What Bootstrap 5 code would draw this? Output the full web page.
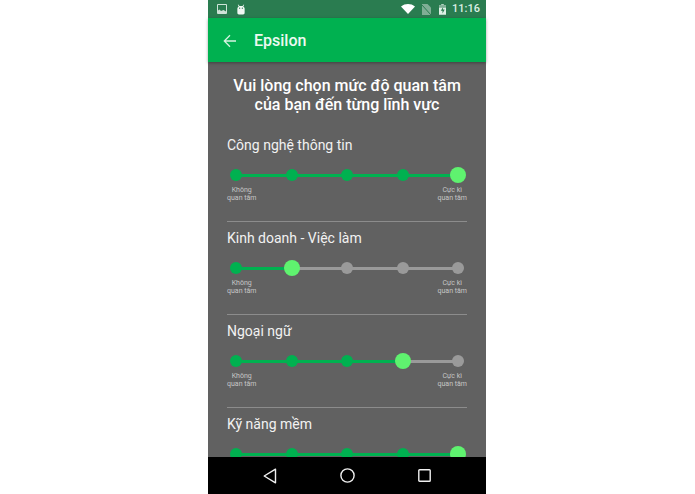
<!DOCTYPE html>
<html lang="vi">
<head>
<meta charset="utf-8">
<title>Epsilon</title>
<link href="https://cdn.jsdelivr.net/npm/bootstrap@5.3.0/dist/css/bootstrap.min.css" rel="stylesheet">
<style>
html,body{height:100%;background:#fff;overflow:hidden}
body{font-family:Roboto,"Noto Sans",sans-serif}
.phone{width:278px;height:494px;margin-left:208px}
.statusbar{height:18px;background:#2a7c50;padding:0 6px 0 9px;flex:none}
.statusbar .clock{font-size:11px;font-weight:500;color:#dff0e6;line-height:18px;margin-left:6px}
.gap-left{margin-right:9px}
.gap-wifi{margin-right:7px}
.gap-sim{margin-right:8px}
.appbar{height:44px;background:#00b150;flex:none;box-shadow:0 1px 3px rgba(0,0,0,.35);padding:2px 0 0 15px;position:relative;z-index:2}
.appbar .ttl{font-size:16px;font-weight:500;color:#eef9f2;margin-left:17px}
.screen{flex:1 1 auto;min-height:0;background:#616161;overflow:hidden;padding:14px 19px 0}
.heading{font-size:16px;font-weight:500;line-height:19px;color:#fff;text-align:center;margin:0 0 23px}
.topic{height:85px;border-bottom:1px solid #8c8c8c}
.topic:last-child{border-bottom:0}
.topic-name{font-size:14px;line-height:16px;color:#f2f2f2;margin:0}
.slider{margin:14px 1px 0;height:16px}
.cell{width:16px;height:16px;flex:none;position:relative;z-index:1}
.pip{width:12px;height:12px;border-radius:50%;background:#00b150}
.pip.off{background:#9a9a9a}
.pip.now{width:16px;height:16px;background:#5ff26f}
.seg{flex:1 1 0;height:3px;margin:1px -3px 0;background:#00b150}
.seg.off{background:#9a9a9a}
.ends{font-size:7px;line-height:8px;color:#c6c6c6;text-align:center;margin-top:3px}
.navbar-bottom{height:37px;background:#000;flex:none;padding:0 55px;position:relative;z-index:2}
</style>
</head>
<body>
<div class="phone d-flex flex-column">
  <div class="statusbar d-flex align-items-center">
    <svg width="10" height="10" viewBox="0 0 10 10" class="gap-left"><rect width="10" height="10" rx="1" fill="#cfe3d8"/><path d="M1 1h8v6.500L6.500 6 4 7 2.500 5.500 1 6.500z" fill="#2a7c50"/></svg>
    <svg width="10" height="11" viewBox="0 0 11 11"><path d="M2.500 0l1.300 1.700h3.400L8.500 0l.5.300L8 2.100c1 .6 1.500 1.400 1.500 2.400v4.700c0 1-.7 1.800-1.700 1.800H3.200c-1 0-1.700-.8-1.700-1.800V4.500c0-1 .5-1.800 1.500-2.400L2 .3z" fill="#f2f8f4"/><circle cx="4" cy="4" r=".7" fill="#2a7c50"/><circle cx="7" cy="4" r=".7" fill="#2a7c50"/></svg>
    <div class="ms-auto d-flex align-items-center">
      <svg width="14" height="10" viewBox="0 0 14 10" class="gap-wifi"><path d="M0 2.500C4-.8 10-.8 14 2.500L7 10z" fill="#fff"/></svg>
      <svg width="9" height="11" viewBox="0 0 9 11" class="gap-sim"><path d="M0 11V0h5.500L9 3.500V11z" fill="#7fae95"/><path d="M0 1l9 10" stroke="#2a7c50" stroke-width="1"/></svg>
      <svg width="7" height="11" viewBox="0 0 8 12"><path d="M2.500 0h3v1H8v11H0V1h2.500z" fill="#dff0e6"/><path d="M0 1h8v3H0z" fill="#7fae95"/><path d="M4.800 3L2 7.500h2v3l2.500-4.500H4.500z" fill="#2a7c50"/></svg>
      <span class="clock">11:16</span>
    </div>
  </div>

  <div class="appbar d-flex align-items-center">
    <svg width="14" height="14" viewBox="0 0 14 14"><path d="M13 7H1.500M7 1.300L1.300 7 7 12.700" fill="none" stroke="#d6f3e1" stroke-width="1.300"/></svg>
    <span class="ttl">Epsilon</span>
  </div>

  <div class="screen">
    <h1 class="heading">Vui lòng chọn mức độ quan tâm<br>của bạn đến từng lĩnh vực</h1>

    <div class="topic mb-2">
      <p class="topic-name">Công nghệ thông tin</p>
      <div class="slider d-flex align-items-center">
        <div class="cell d-flex align-items-center justify-content-center"><div class="pip"></div></div><div class="seg"></div>
        <div class="cell d-flex align-items-center justify-content-center"><div class="pip"></div></div><div class="seg"></div>
        <div class="cell d-flex align-items-center justify-content-center"><div class="pip"></div></div><div class="seg"></div>
        <div class="cell d-flex align-items-center justify-content-center"><div class="pip"></div></div><div class="seg"></div>
        <div class="cell d-flex align-items-center justify-content-center"><div class="pip now"></div></div>
      </div>
      <div class="ends d-flex justify-content-between"><span>Không<br>quan tâm</span><span>Cực kì<br>quan tâm</span></div>
    </div>

    <div class="topic mb-2">
      <p class="topic-name">Kinh doanh - Việc làm</p>
      <div class="slider d-flex align-items-center">
        <div class="cell d-flex align-items-center justify-content-center"><div class="pip"></div></div><div class="seg"></div>
        <div class="cell d-flex align-items-center justify-content-center"><div class="pip now"></div></div><div class="seg off"></div>
        <div class="cell d-flex align-items-center justify-content-center"><div class="pip off"></div></div><div class="seg off"></div>
        <div class="cell d-flex align-items-center justify-content-center"><div class="pip off"></div></div><div class="seg off"></div>
        <div class="cell d-flex align-items-center justify-content-center"><div class="pip off"></div></div>
      </div>
      <div class="ends d-flex justify-content-between"><span>Không<br>quan tâm</span><span>Cực kì<br>quan tâm</span></div>
    </div>

    <div class="topic mb-2">
      <p class="topic-name">Ngoại ngữ</p>
      <div class="slider d-flex align-items-center">
        <div class="cell d-flex align-items-center justify-content-center"><div class="pip"></div></div><div class="seg"></div>
        <div class="cell d-flex align-items-center justify-content-center"><div class="pip"></div></div><div class="seg"></div>
        <div class="cell d-flex align-items-center justify-content-center"><div class="pip"></div></div><div class="seg"></div>
        <div class="cell d-flex align-items-center justify-content-center"><div class="pip now"></div></div><div class="seg off"></div>
        <div class="cell d-flex align-items-center justify-content-center"><div class="pip off"></div></div>
      </div>
      <div class="ends d-flex justify-content-between"><span>Không<br>quan tâm</span><span>Cực kì<br>quan tâm</span></div>
    </div>

    <div class="topic">
      <p class="topic-name">Kỹ năng mềm</p>
      <div class="slider d-flex align-items-center">
        <div class="cell d-flex align-items-center justify-content-center"><div class="pip"></div></div><div class="seg"></div>
        <div class="cell d-flex align-items-center justify-content-center"><div class="pip"></div></div><div class="seg"></div>
        <div class="cell d-flex align-items-center justify-content-center"><div class="pip"></div></div><div class="seg"></div>
        <div class="cell d-flex align-items-center justify-content-center"><div class="pip"></div></div><div class="seg"></div>
        <div class="cell d-flex align-items-center justify-content-center"><div class="pip now"></div></div>
      </div>
    </div>
  </div>

  <div class="navbar-bottom d-flex align-items-center justify-content-between">
    <svg width="14" height="16" viewBox="0 0 14 16"><path d="M12.500 1.200V14.800L1.200 8z" fill="none" stroke="#f0f0f0" stroke-width="1.400" stroke-linejoin="round"/></svg>
    <svg width="15" height="15" viewBox="0 0 15 15"><circle cx="7.500" cy="7.500" r="6.600" fill="none" stroke="#f0f0f0" stroke-width="1.400"/></svg>
    <svg width="13" height="13" viewBox="0 0 13 13"><rect x=".8" y=".8" width="11.400" height="11.400" rx=".8" fill="none" stroke="#f0f0f0" stroke-width="1.400"/></svg>
  </div>
</div>
<script src="https://cdn.jsdelivr.net/npm/bootstrap@5.3.0/dist/js/bootstrap.bundle.min.js"></script>
</body>
</html>
